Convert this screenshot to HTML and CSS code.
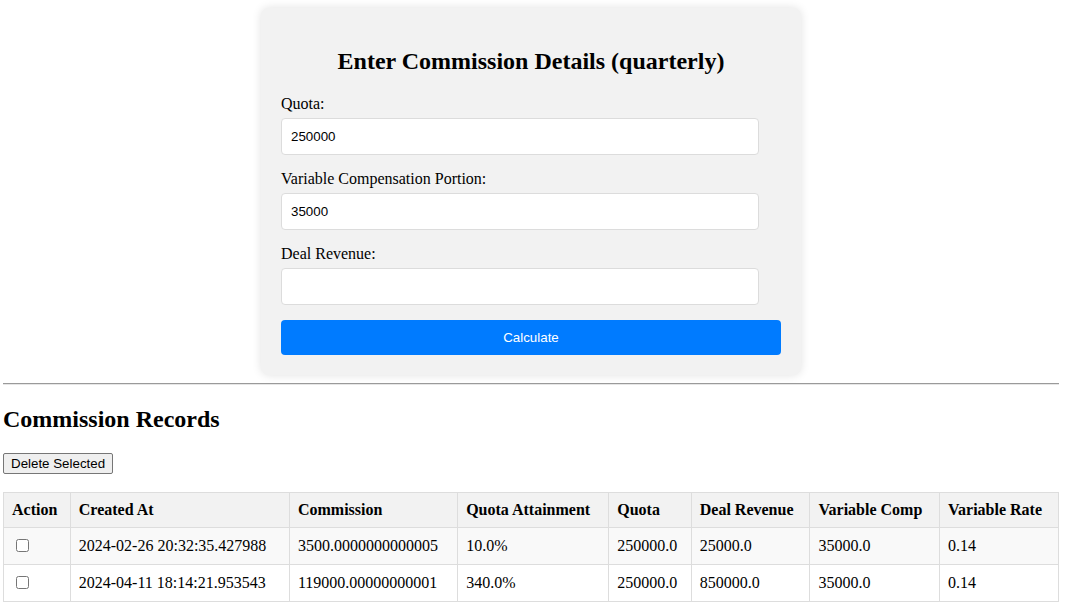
FILE: index.html
```html
<!DOCTYPE html>
<html>
<head>
<meta charset="utf-8">
<link rel="stylesheet" href="styles.css">
</head>
<body>
<div class="card">
  <h2 class="card-title">Enter Commission Details (quarterly)</h2>
  <form class="form">
    <label class="label">Quota:</label>
    <input class="input" type="text" value="250000">
    <label class="label">Variable Compensation Portion:</label>
    <input class="input" type="text" value="35000">
    <label class="label">Deal Revenue:</label>
    <input class="input" type="text" value="">
    <button class="calc-btn" type="button">Calculate</button>
  </form>
</div>
<hr class="divider">
<h2 class="section-title">Commission Records</h2>
<button class="delete-btn" type="button">Delete Selected</button>
<table class="records">
  <tr>
    <th>Action</th><th>Created At</th><th>Commission</th><th>Quota Attainment</th><th>Quota</th><th>Deal Revenue</th><th>Variable Comp</th><th>Variable Rate</th>
  </tr>
  <tr>
    <td><input type="checkbox"></td><td>2024-02-26 20:32:35.427988</td><td>3500.0000000000005</td><td>10.0%</td><td>250000.0</td><td>25000.0</td><td>35000.0</td><td>0.14</td>
  </tr>
  <tr>
    <td><input type="checkbox"></td><td>2024-04-11 18:14:21.953543</td><td>119000.00000000001</td><td>340.0%</td><td>250000.0</td><td>850000.0</td><td>35000.0</td><td>0.14</td>
  </tr>
</table>
</body>
</html>
```

FILE: styles.css
```css
html, body {
  background: #ffffff;
}
body {
  margin: 0;
  padding: 8px 7px 8px 3px;
  font-family: "Liberation Serif", "Times New Roman", serif;
  font-size: 16px;
  color: #000;
}
.card {
  width: 500px;
  margin: 0 auto;
  padding: 20px;
  background: #f2f2f2;
  border-radius: 8px;
  box-shadow: 0 0 10px rgba(0, 0, 0, 0.12);
}
.card-title {
  text-align: center;
  font-size: 24px;
  margin: 20px 0 20px;
}
.form {
  display: flex;
  flex-direction: column;
  align-items: flex-start;
}
.label {
  display: block;
  margin-bottom: 5px;
  line-height: 18px;
}
.input {
  box-sizing: border-box;
  width: 478px;
  height: 37px;
  padding: 0 9px;
  margin: 0 0 15px;
  border: 1px solid #dcdcdc;
  border-radius: 4px;
  background: #fff;
  font-family: "Liberation Sans", Arial, sans-serif;
  font-size: 13.33px;
  color: #000;
}
.calc-btn {
  box-sizing: border-box;
  width: 500px;
  height: 35px;
  border: none;
  border-radius: 4px;
  background: #007bff;
  color: #fff;
  font-family: "Liberation Sans", Arial, sans-serif;
  font-size: 13.33px;
}
.divider {
  margin: 8px 0;
  border: none;
  border-top: 1px solid #9a9a9a;
  border-bottom: 1px solid #e6e6e6;
}
.section-title {
  font-size: 24px;
  margin: 21px 0 20px;
}
.delete-btn {
  display: block;
  box-sizing: border-box;
  height: 21px;
  font-family: "Liberation Sans", Arial, sans-serif;
  font-size: 13.33px;
  padding: 1px 7px;
  border: 1px solid #767676;
  border-radius: 2px;
  background: #efefef;
  color: #000;
}
.records {
  width: 100%;
  margin-top: 18px;
  border-collapse: collapse;
  border: 1px solid #ddd;
}
.records th,
.records td {
  border: 1px solid #ddd;
  padding: 8px;
  text-align: left;
}
.records th {
  background: #f2f2f2;
  font-weight: bold;
}
.records tr:nth-child(even) {
  background: #f9f9f9;
}
.records input[type="checkbox"] {
  margin: 3px 3px 3px 4px;
}
```
